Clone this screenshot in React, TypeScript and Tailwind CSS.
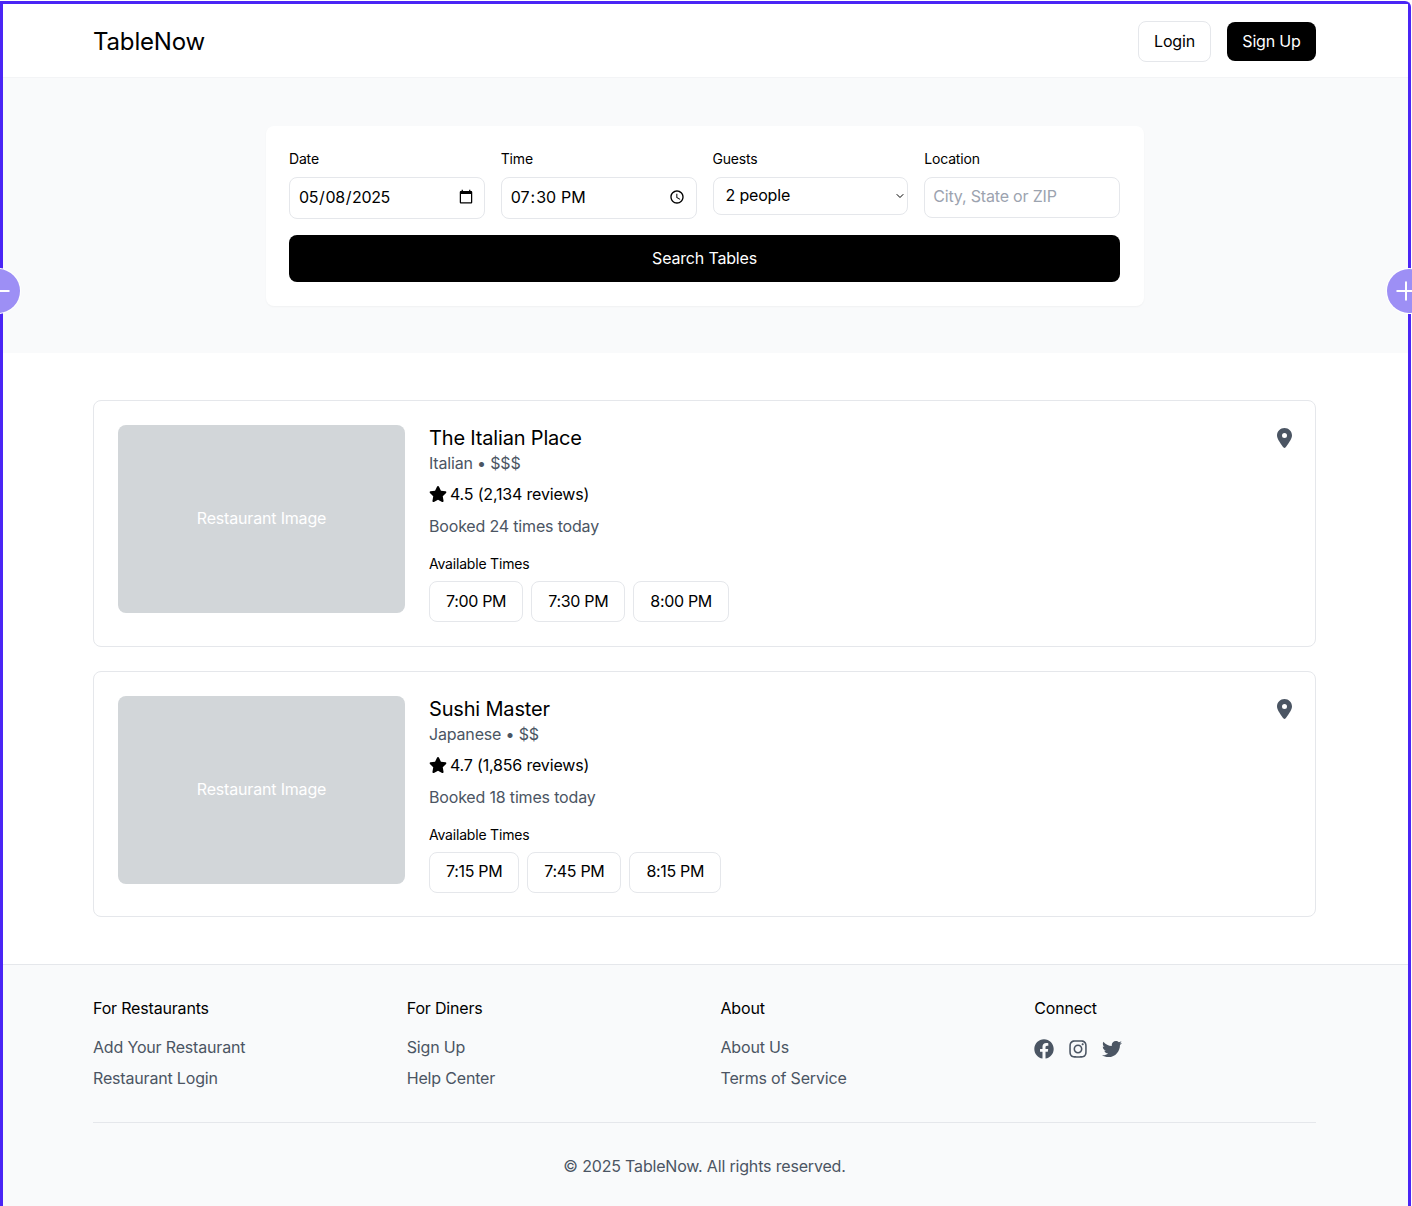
import { FaFacebook, FaInstagram, FaStar, FaTwitter } from "react-icons/fa";
import { FaLocationDot } from "react-icons/fa6";
import { ChevronDown, Minus, Plus } from "lucide-react";

const restaurants = [
  {
    name: "The Italian Place",
    meta: "Italian • $$$",
    rating: "4.5 (2,134 reviews)",
    booked: "Booked 24 times today",
    times: ["7:00 PM", "7:30 PM", "8:00 PM"],
  },
  {
    name: "Sushi Master",
    meta: "Japanese • $$",
    rating: "4.7 (1,856 reviews)",
    booked: "Booked 18 times today",
    times: ["7:15 PM", "7:45 PM", "8:15 PM"],
  },
];

const footerColumns = [
  { title: "For Restaurants", links: ["Add Your Restaurant", "Restaurant Login"] },
  { title: "For Diners", links: ["Sign Up", "Help Center"] },
  { title: "About", links: ["About Us", "Terms of Service"] },
];

function RestaurantCard({ restaurant }: { restaurant: (typeof restaurants)[number] }) {
  return (
    <div className="flex gap-6 rounded-lg border border-gray-200 bg-white px-6 pt-6 pb-[23.5px]">
      <div className="flex h-[188px] w-[287px] shrink-0 items-center justify-center rounded-lg bg-[#d2d6d9] pb-[2px] text-white">
        Restaurant Image
      </div>
      <div className="flex-1">
        <div className="flex justify-between">
          <div>
            <h3 className="text-xl leading-[26px] text-black">{restaurant.name}</h3>
            <p className="leading-6 text-[#4b5563]">{restaurant.meta}</p>
          </div>
          <FaLocationDot className="mt-[3px] -mr-px h-5 w-[15px] text-[#4b5563]" />
        </div>
        <div className="mt-[7px] flex items-center gap-[3px] leading-6 text-black">
          <FaStar className="h-4 w-[18px]" />
          <span>{restaurant.rating}</span>
        </div>
        <p className="mt-2 leading-6 text-[#4b5563]">{restaurant.booked}</p>
        <p className="mt-[16px] text-sm leading-5 tracking-[-0.014em] text-black">Available Times</p>
        <div className="mt-[7px] flex gap-2">
          {restaurant.times.map((time) => (
            <button
              key={time}
              className="h-[41px] rounded-lg border border-gray-200 bg-white px-4 pb-[2px] tracking-[-0.02em] text-black"
            >
              {time}
            </button>
          ))}
        </div>
      </div>
    </div>
  );
}

export default function App() {
  return (
    <div className="relative h-[1206px] w-[1412px] overflow-hidden bg-white font-['Inter',sans-serif] tracking-[-0.011em] text-black">
      <div className="mt-px mr-px flex h-[1205px] flex-col rounded-tr-md border-x-[3px] border-t-[3px] border-[#4a25f5]">
        <header className="flex h-[74px] shrink-0 items-center justify-between border-b border-gray-100 bg-white pt-0.5 pr-[92px] pl-[90px]">
          <span className="text-2xl">TableNow</span>
          <div className="flex items-center gap-4">
            <button className="h-[41px] w-[73px] rounded-lg border border-gray-200 bg-white pb-[2px]">Login</button>
            <button className="h-[39px] w-[89px] rounded-lg bg-black pb-[2px] text-white">Sign Up</button>
          </div>
        </header>

        <section className="flex h-[275px] shrink-0 justify-center bg-[#f9fafb] pt-12 pr-px">
          <div className="h-[180px] w-[878px] rounded-lg bg-white pt-[23px] pr-6 pb-6 pl-[23px] shadow-[0_1px_2px_rgba(0,0,0,0.04)]">
            <div className="grid grid-cols-4 items-start gap-4 text-sm">
              <label className="block">
                <span className="mb-2 block leading-5">Date</span>
                <input
                  type="date"
                  defaultValue="2025-05-08"
                  className="h-[42px] w-full rounded-lg border border-gray-200 bg-white px-2 pb-[2px] text-base tracking-[-0.024em] outline-none"
                />
              </label>
              <label className="block">
                <span className="mb-2 block leading-5">Time</span>
                <input
                  type="time"
                  defaultValue="19:30"
                  className="h-[42px] w-full rounded-lg border border-gray-200 bg-white pr-[7px] pb-[2px] pl-2 text-base tracking-normal outline-none"
                />
              </label>
              <label className="block">
                <span className="mb-2 block leading-5">Guests</span>
                <span className="relative block">
                  <select className="h-[38px] w-full appearance-none rounded-lg border border-gray-200 bg-white pr-6 pb-[2px] pl-3 text-base outline-none">
                    <option>2 people</option>
                  </select>
                  <ChevronDown size={12} strokeWidth={2} className="absolute top-[13px] right-[2px]" />
                </span>
              </label>
              <label className="block">
                <span className="mb-2 block leading-5">Location</span>
                <input
                  type="text"
                  placeholder="City, State or ZIP"
                  className="h-[41px] w-full rounded-lg border border-gray-200 bg-white px-2 pb-[3px] text-base outline-none placeholder:text-[#9ca3af]"
                />
              </label>
            </div>
            <button className="mt-4 h-[47px] w-full rounded-lg bg-black pb-[2px] text-white">Search Tables</button>
          </div>
        </section>

        <main className="flex flex-1 flex-col gap-6 bg-white pt-[47px] pr-[92px] pl-[90px]">
          {restaurants.map((restaurant) => (
            <RestaurantCard key={restaurant.name} restaurant={restaurant} />
          ))}
        </main>

        <footer className="h-[242px] shrink-0 border-t border-gray-200 bg-[#f9fafb] pt-[31px] pr-[92px] pl-[90px]">
          <div className="grid grid-cols-4 gap-8">
            {footerColumns.map((column) => (
              <div key={column.title}>
                <h4 className="leading-6">{column.title}</h4>
                <ul className="mt-[15px] flex flex-col gap-[7px] leading-6 text-[#4b5563]">
                  {column.links.map((link) => (
                    <li key={link}>{link}</li>
                  ))}
                </ul>
              </div>
            ))}
            <div>
              <h4 className="leading-6">Connect</h4>
              <div className="mt-[19px] flex gap-[14px] text-xl text-[#4b5563]">
                <FaFacebook />
                <FaInstagram />
                <FaTwitter />
              </div>
            </div>
          </div>
          <div className="mt-8 border-t border-gray-200 pt-[31px] text-center leading-6 text-[#4b5563]">
            © 2025 TableNow. All rights reserved.
          </div>
        </footer>
      </div>

      <div className="absolute top-[269px] left-[-24px] flex h-11 w-11 items-center justify-center rounded-full bg-[#9d8ff5] text-white ring-1 ring-white">
        <Minus size={30} strokeWidth={1.6} className="translate-x-[2px]" />
      </div>
      <div className="absolute top-[269px] left-[1387px] flex h-11 w-11 items-center justify-center rounded-full bg-[#9d8ff5] text-white ring-1 ring-white">
        <Plus size={30} strokeWidth={1.6} className="-translate-x-[3px]" />
      </div>
    </div>
  );
}
